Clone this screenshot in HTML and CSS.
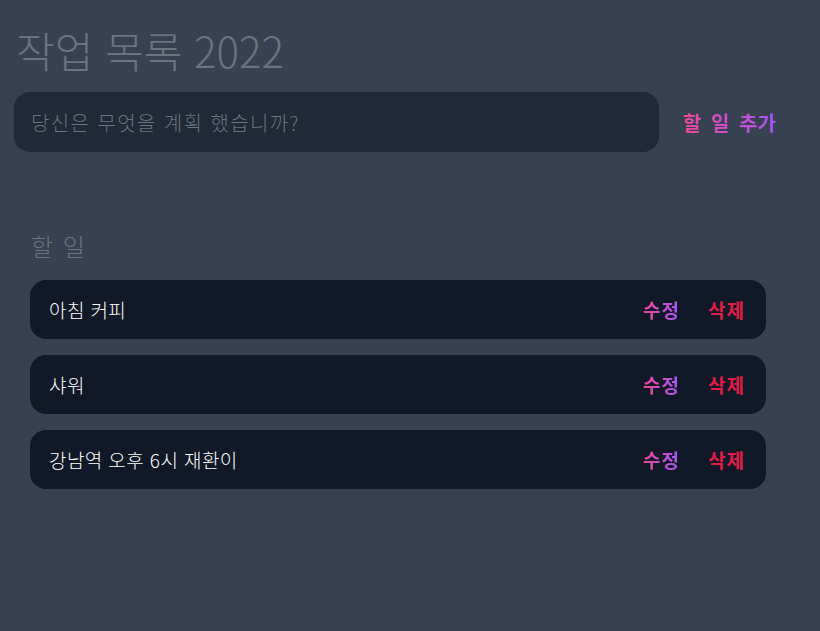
FILE: index.html
```html
<!DOCTYPE html>
<html lang="ko">
<head>
<meta charset="utf-8">
<title>작업 목록 2022</title>
<link rel="stylesheet" href="styles.css">
</head>
<body>
<div class="page">
  <h1 class="title">작업 목록 2022</h1>
  <form class="add-form">
    <input class="add-input" type="text" placeholder="당신은 무엇을 계획 했습니까?">
    <button class="add-btn" type="button"><span class="grad">할 일 추가</span></button>
  </form>
  <section class="tasks">
    <h2 class="tasks-title">할 일</h2>
    <div class="task-list">
      <div class="task">
        <span class="task-text">아침 커피</span>
        <div class="actions">
          <button class="edit" type="button"><span class="grad">수정</span></button>
          <button class="delete" type="button">삭제</button>
        </div>
      </div>
      <div class="task">
        <span class="task-text">샤워</span>
        <div class="actions">
          <button class="edit" type="button"><span class="grad">수정</span></button>
          <button class="delete" type="button">삭제</button>
        </div>
      </div>
      <div class="task">
        <span class="task-text">강남역 오후 6시 재환이</span>
        <div class="actions">
          <button class="edit" type="button"><span class="grad">수정</span></button>
          <button class="delete" type="button">삭제</button>
        </div>
      </div>
    </div>
  </section>
</div>
</body>
</html>
```
FILE: styles.css
```css
* { box-sizing: border-box; }
html, body {
  margin: 0;
  background: #374151;
  font-family: "Noto Sans CJK KR", "Noto Sans", sans-serif;
}
.page {
  padding: 26px 0 0 14px;
  width: 820px;
  min-height: 631px;
}
.title {
  margin: 0 0 18px 2px;
  font-size: 42px;
  line-height: 48px;
  font-weight: 300;
  letter-spacing: 0;
  color: #6b7280;
}
.add-form {
  display: flex;
  align-items: center;
  margin: 0;
}
.add-input {
  width: 645px;
  height: 60px;
  border: none;
  outline: none;
  border-radius: 16px;
  background: #1f2937;
  padding: 0 17px;
  font-family: inherit;
  font-size: 20px;
  font-weight: 300;
  letter-spacing: 1.4px;
  color: #e5e7eb;
}
.add-input::placeholder { color: #6b7280; }
.add-btn {
  border: none;
  background: transparent;
  padding: 0 24px;
  font-family: inherit;
  font-size: 20px;
  font-weight: 700;
  word-spacing: 4px;
  cursor: pointer;
}
.grad {
  background: linear-gradient(to right, #ec4899, #a855f7);
  -webkit-background-clip: text;
  background-clip: text;
  color: transparent;
}
.tasks {
  width: 768px;
  padding: 0 16px;
  margin-top: 78px;
}
.tasks-title {
  margin: 0 0 18px 1px;
  font-size: 24px;
  line-height: 32px;
  font-weight: 300;
  word-spacing: 3px;
  color: #6b7280;
}
.task-list {
  display: flex;
  flex-direction: column;
  gap: 16px;
}
.task {
  display: flex;
  align-items: center;
  justify-content: space-between;
  height: 59px;
  border-radius: 16px;
  background: #111827;
  padding: 0 21px 0 19px;
}
.task-text {
  font-size: 19px;
  font-weight: 300;
  letter-spacing: 0.4px;
  color: #ffffff;
}
.actions {
  display: flex;
  gap: 28px;
}
.edit, .delete {
  border: none;
  background: transparent;
  padding: 0;
  font-family: inherit;
  font-size: 19px;
  font-weight: 700;
  letter-spacing: 1px;
  cursor: pointer;
}
.delete { color: #e11d48; }
```
